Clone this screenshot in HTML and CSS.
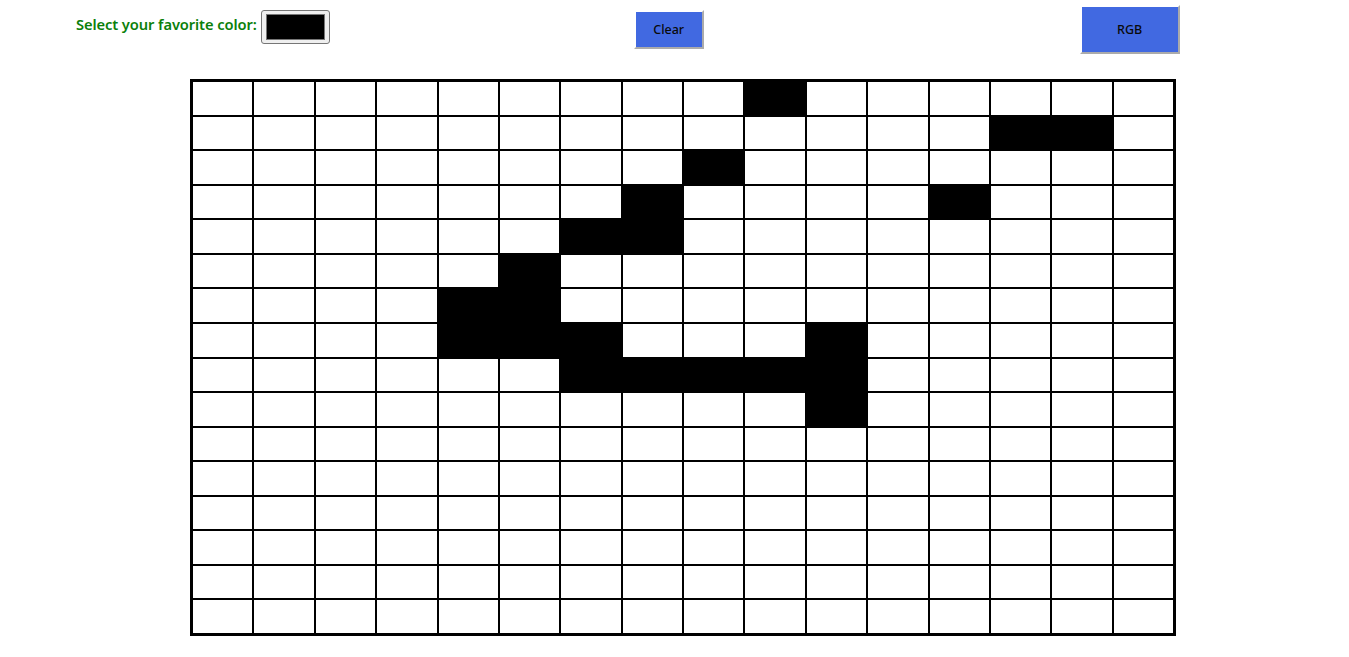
FILE: index.html
```html
<!DOCTYPE html>
<html lang="en">
<head>
<meta charset="utf-8">
<title>Pixel Art Maker</title>
<link rel="stylesheet" href="styles.css">
</head>
<body>
<header class="toolbar">
  <div class="picker">
    <label for="colorPicker" class="picker-label">Select your favorite color:</label>
    <input type="color" id="colorPicker" class="picker-input" value="#000000">
  </div>
  <button class="btn btn-clear" type="button">Clear</button>
  <button class="btn btn-rgb" type="button">RGB</button>
</header>
<main class="canvas">
  <div class="grid">
    <div class="cell"></div><div class="cell"></div><div class="cell"></div><div class="cell"></div><div class="cell"></div><div class="cell"></div><div class="cell"></div><div class="cell"></div><div class="cell"></div><div class="cell on"></div><div class="cell"></div><div class="cell"></div><div class="cell"></div><div class="cell"></div><div class="cell"></div><div class="cell"></div>
    <div class="cell"></div><div class="cell"></div><div class="cell"></div><div class="cell"></div><div class="cell"></div><div class="cell"></div><div class="cell"></div><div class="cell"></div><div class="cell"></div><div class="cell"></div><div class="cell"></div><div class="cell"></div><div class="cell"></div><div class="cell on"></div><div class="cell on"></div><div class="cell"></div>
    <div class="cell"></div><div class="cell"></div><div class="cell"></div><div class="cell"></div><div class="cell"></div><div class="cell"></div><div class="cell"></div><div class="cell"></div><div class="cell on"></div><div class="cell"></div><div class="cell"></div><div class="cell"></div><div class="cell"></div><div class="cell"></div><div class="cell"></div><div class="cell"></div>
    <div class="cell"></div><div class="cell"></div><div class="cell"></div><div class="cell"></div><div class="cell"></div><div class="cell"></div><div class="cell"></div><div class="cell on"></div><div class="cell"></div><div class="cell"></div><div class="cell"></div><div class="cell"></div><div class="cell on"></div><div class="cell"></div><div class="cell"></div><div class="cell"></div>
    <div class="cell"></div><div class="cell"></div><div class="cell"></div><div class="cell"></div><div class="cell"></div><div class="cell"></div><div class="cell on"></div><div class="cell on"></div><div class="cell"></div><div class="cell"></div><div class="cell"></div><div class="cell"></div><div class="cell"></div><div class="cell"></div><div class="cell"></div><div class="cell"></div>
    <div class="cell"></div><div class="cell"></div><div class="cell"></div><div class="cell"></div><div class="cell"></div><div class="cell on"></div><div class="cell"></div><div class="cell"></div><div class="cell"></div><div class="cell"></div><div class="cell"></div><div class="cell"></div><div class="cell"></div><div class="cell"></div><div class="cell"></div><div class="cell"></div>
    <div class="cell"></div><div class="cell"></div><div class="cell"></div><div class="cell"></div><div class="cell on"></div><div class="cell on"></div><div class="cell"></div><div class="cell"></div><div class="cell"></div><div class="cell"></div><div class="cell"></div><div class="cell"></div><div class="cell"></div><div class="cell"></div><div class="cell"></div><div class="cell"></div>
    <div class="cell"></div><div class="cell"></div><div class="cell"></div><div class="cell"></div><div class="cell on"></div><div class="cell on"></div><div class="cell on"></div><div class="cell"></div><div class="cell"></div><div class="cell"></div><div class="cell on"></div><div class="cell"></div><div class="cell"></div><div class="cell"></div><div class="cell"></div><div class="cell"></div>
    <div class="cell"></div><div class="cell"></div><div class="cell"></div><div class="cell"></div><div class="cell"></div><div class="cell"></div><div class="cell on"></div><div class="cell on"></div><div class="cell on"></div><div class="cell on"></div><div class="cell on"></div><div class="cell"></div><div class="cell"></div><div class="cell"></div><div class="cell"></div><div class="cell"></div>
    <div class="cell"></div><div class="cell"></div><div class="cell"></div><div class="cell"></div><div class="cell"></div><div class="cell"></div><div class="cell"></div><div class="cell"></div><div class="cell"></div><div class="cell"></div><div class="cell on"></div><div class="cell"></div><div class="cell"></div><div class="cell"></div><div class="cell"></div><div class="cell"></div>
    <div class="cell"></div><div class="cell"></div><div class="cell"></div><div class="cell"></div><div class="cell"></div><div class="cell"></div><div class="cell"></div><div class="cell"></div><div class="cell"></div><div class="cell"></div><div class="cell"></div><div class="cell"></div><div class="cell"></div><div class="cell"></div><div class="cell"></div><div class="cell"></div>
    <div class="cell"></div><div class="cell"></div><div class="cell"></div><div class="cell"></div><div class="cell"></div><div class="cell"></div><div class="cell"></div><div class="cell"></div><div class="cell"></div><div class="cell"></div><div class="cell"></div><div class="cell"></div><div class="cell"></div><div class="cell"></div><div class="cell"></div><div class="cell"></div>
    <div class="cell"></div><div class="cell"></div><div class="cell"></div><div class="cell"></div><div class="cell"></div><div class="cell"></div><div class="cell"></div><div class="cell"></div><div class="cell"></div><div class="cell"></div><div class="cell"></div><div class="cell"></div><div class="cell"></div><div class="cell"></div><div class="cell"></div><div class="cell"></div>
    <div class="cell"></div><div class="cell"></div><div class="cell"></div><div class="cell"></div><div class="cell"></div><div class="cell"></div><div class="cell"></div><div class="cell"></div><div class="cell"></div><div class="cell"></div><div class="cell"></div><div class="cell"></div><div class="cell"></div><div class="cell"></div><div class="cell"></div><div class="cell"></div>
    <div class="cell"></div><div class="cell"></div><div class="cell"></div><div class="cell"></div><div class="cell"></div><div class="cell"></div><div class="cell"></div><div class="cell"></div><div class="cell"></div><div class="cell"></div><div class="cell"></div><div class="cell"></div><div class="cell"></div><div class="cell"></div><div class="cell"></div><div class="cell"></div>
    <div class="cell"></div><div class="cell"></div><div class="cell"></div><div class="cell"></div><div class="cell"></div><div class="cell"></div><div class="cell"></div><div class="cell"></div><div class="cell"></div><div class="cell"></div><div class="cell"></div><div class="cell"></div><div class="cell"></div><div class="cell"></div><div class="cell"></div><div class="cell"></div>
  </div>
</main>
</body>
</html>
```

FILE: styles.css
```css
html, body {
  margin: 0;
  padding: 0;
  background: #ffffff;
}

body {
  font-family: "Noto Sans", "Open Sans", sans-serif;
}

.toolbar {
  display: flex;
  align-items: center;
  height: 59px;
  padding: 0 0 0 76px;
  box-sizing: border-box;
}

.picker {
  display: flex;
  align-items: center;
  gap: 4px;
  margin-bottom: 5px;
}

.picker-label {
  color: #0b800b;
  font-size: 14.7px;
  font-weight: 600;
  letter-spacing: -0.1px;
  padding-bottom: 6px;
}

.picker-input {
  width: 69px;
  height: 34px;
  margin: 0;
  padding: 3px 4px;
  box-sizing: border-box;
  background: #efefef;
  border: 1px solid #767676;
  border-radius: 3px;
}

.picker-input::-webkit-color-swatch-wrapper {
  padding: 0;
}

.picker-input::-webkit-color-swatch {
  border: 1px solid #777777;
  border-radius: 0;
}

.btn {
  background: #4169e1;
  color: #0a0a0a;
  font-family: "Noto Sans", "Open Sans", sans-serif;
  font-size: 12.5px;
  font-weight: 500;
  border-style: solid;
  border-width: 2px;
  border-color: #ffffff #ababab #ababab #ffffff;
  padding: 0;
  margin: 0;
  cursor: pointer;
}

.btn-clear {
  width: 70px;
  height: 39px;
  margin-left: 304px;
}

.btn-rgb {
  width: 100px;
  height: 49px;
  margin-left: 376px;
}

.canvas {
  padding: 20px 0 0 190px;
}

.grid {
  display: grid;
  grid-template-columns: repeat(16, 1fr);
  grid-template-rows: repeat(16, 1fr);
  gap: 2px;
  padding: 3px;
  width: 986px;
  height: 557px;
  box-sizing: border-box;
  background: #000000;
}

.cell {
  background: #ffffff;
}

.cell.on {
  background: #000000;
}
```
